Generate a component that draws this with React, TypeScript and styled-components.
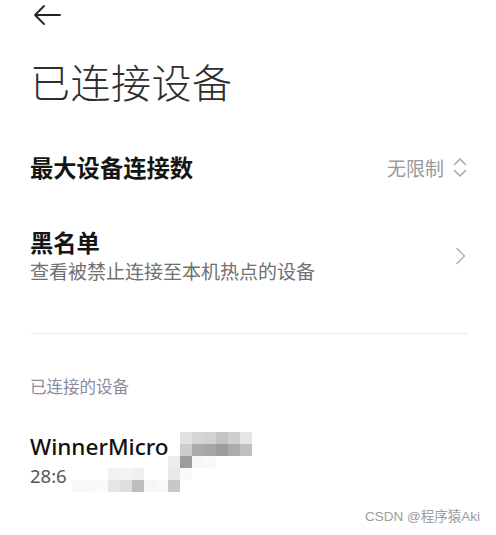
import styled, { createGlobalStyle } from "styled-components";

const GlobalStyle = createGlobalStyle`
  html, body {
    margin: 0;
    padding: 0;
    background: #ffffff;
  }
  body {
    font-family: "Noto Sans CJK SC", "Noto Sans", sans-serif;
    -webkit-font-smoothing: antialiased;
  }
`;

const Page = styled.div`
  position: relative;
  width: 496px;
  height: 535px;
  overflow: hidden;
  display: flex;
  flex-direction: column;
  padding: 0 29px 0 30px;
  box-sizing: border-box;
`;

const Header = styled.div`
  height: 30px;
  display: flex;
  align-items: center;
  padding-left: 3px;
`;

const BackButton = styled.button`
  border: 0;
  background: none;
  padding: 0;
  display: flex;
  color: #222;
`;

const Title = styled.h1`
  margin: 27px 0 0;
  font-size: 40px;
  line-height: 48px;
  font-weight: 300;
  color: #2e2e2e;
  letter-spacing: 0.5px;
`;

const Row = styled.div<{ $top: number; $height: number }>`
  margin-top: ${(p) => p.$top}px;
  min-height: ${(p) => p.$height}px;
  display: flex;
  align-items: center;
  justify-content: space-between;
`;

const RowText = styled.div`
  display: flex;
  flex-direction: column;
`;

const RowTitle = styled.div`
  font-size: 23.3px;
  line-height: 30px;
  font-weight: 700;
  color: #151515;
`;

const RowSub = styled.div`
  font-size: 19px;
  line-height: 28px;
  color: #707070;
`;

const RowValue = styled.div`
  display: flex;
  align-items: center;
  gap: 9px;
  font-size: 19px;
  color: #9a9a9a;
`;

const Divider = styled.hr`
  margin: 48px 0 0;
  border: 0;
  height: 1px;
  background: #ebebef;
  width: 438px;
`;

const SectionLabel = styled.div`
  margin-top: 40px;
  font-size: 16.5px;
  line-height: 24px;
  color: #8a8b9c;
`;

const Device = styled.div`
  position: relative;
  margin-top: 34px;
`;

const DeviceName = styled.div`
  font-family: "Noto Sans", sans-serif;
  font-size: 22.5px;
  line-height: 30px;
  font-weight: 500;
  color: #111;
`;

const DeviceMac = styled.div`
  font-family: "Noto Sans", sans-serif;
  font-size: 18.5px;
  line-height: 28px;
  color: #555;
`;

// pixelated cover over the rest of the name and address
const Mosaic = styled.svg`
  position: absolute;
  left: 0;
  top: 0;
`;

const Watermark = styled.div`
  position: absolute;
  right: 16px;
  bottom: 10px;
  font-family: "Liberation Sans", "Noto Sans CJK SC", sans-serif;
  font-size: 13.5px;
  color: #9c9c9c;
`;

const mosaicCells: [number, number, string][] = [
  [150, 0, "#e2e2e2"],
  [162, 0, "#d6d6d6"],
  [174, 0, "#d2d2d2"],
  [186, 0, "#c4c4c4"],
  [198, 0, "#cfcfcf"],
  [210, 0, "#e6e6e6"],
  [150, 12, "#cdcdcd"],
  [162, 12, "#ababab"],
  [174, 12, "#a6a6a6"],
  [186, 12, "#9d9d9d"],
  [198, 12, "#acacac"],
  [210, 12, "#c0c0c0"],
  [138, 24, "#ececec"],
  [150, 24, "#9c9c9c"],
  [162, 24, "#f7f7f7"],
  [174, 24, "#f9f9f9"],
  [138, 36, "#e8e8e8"],
  [150, 36, "#fafafa"],
  [78, 36, "#f2f2f2"],
  [90, 36, "#f4f4f4"],
  [102, 36, "#f0f0f0"],
  [42, 48, "#f8f8f8"],
  [54, 48, "#f9f9f9"],
  [66, 48, "#fafafa"],
  [78, 48, "#e6e6e6"],
  [90, 48, "#dedede"],
  [102, 48, "#bdbdbd"],
  [114, 48, "#f6f6f6"],
  [126, 48, "#f8f8f8"],
  [138, 48, "#c8c8c8"],
];

function BackArrow() {
  return (
    <svg width="28" height="22" viewBox="0 0 28 22" fill="none">
      <path d="M27 11H2M11 2L2 11l9 9" stroke="currentColor" strokeWidth="1.8" strokeLinecap="round" strokeLinejoin="round" />
    </svg>
  );
}

function UpDown() {
  return (
    <svg width="14" height="21" viewBox="0 0 14 21" fill="none">
      <path d="M1.5 7.5L7 2l5.5 5.5M1.5 13.5L7 19l5.5-5.5" stroke="#a8a8a8" strokeWidth="1.6" strokeLinecap="round" strokeLinejoin="round" />
    </svg>
  );
}

function ChevronRight() {
  return (
    <svg width="12" height="18" viewBox="0 0 12 18" fill="none">
      <path d="M2 1.5L9.5 9 2 16.5" stroke="#b0b0b0" strokeWidth="1.5" strokeLinecap="round" strokeLinejoin="round" />
    </svg>
  );
}

export default function App() {
  return (
    <>
      <GlobalStyle />
      <Page>
        <Header>
          <BackButton>
            <BackArrow />
          </BackButton>
        </Header>

        <Title>已连接设备</Title>

        <Row $top={32} $height={60}>
          <RowTitle>最大设备连接数</RowTitle>
          <RowValue>
            <span>无限制</span>
            <UpDown />
          </RowValue>
        </Row>

        <Row $top={30} $height={58}>
          <RowText>
            <RowTitle>黑名单</RowTitle>
            <RowSub>查看被禁止连接至本机热点的设备</RowSub>
          </RowText>
          <RowValue>
            <ChevronRight />
          </RowValue>
        </Row>

        <Divider />

        <SectionLabel>已连接的设备</SectionLabel>

        <Device>
          <DeviceName>WinnerMicro</DeviceName>
          <DeviceMac>28:6</DeviceMac>
          <Mosaic width="230" height="62" viewBox="0 0 230 62">
            {mosaicCells.map(([x, y, c], i) => (
              <rect key={i} x={x} y={y} width="12" height="12" fill={c} />
            ))}
          </Mosaic>
        </Device>

        <Watermark>CSDN @程序猿Aki</Watermark>
      </Page>
    </>
  );
}
